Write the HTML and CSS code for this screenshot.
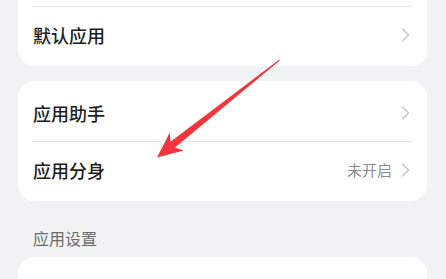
FILE: index.html
```html
<!DOCTYPE html>
<html lang="zh-CN">
<head>
<meta charset="utf-8">
<link rel="stylesheet" href="styles.css">
</head>
<body>
<div class="page">
  <div class="card card-cut">
    <div class="row">
      <span class="label">默认应用</span>
      <span class="right"><svg class="chev" viewBox="0 0 9 14" width="9" height="14"><polyline points="1.5,1 7.5,7 1.5,13"/></svg></span>
    </div>
  </div>
  <div class="card">
    <div class="row">
      <span class="label">应用助手</span>
      <span class="right"><svg class="chev" viewBox="0 0 9 14" width="9" height="14"><polyline points="1.5,1 7.5,7 1.5,13"/></svg></span>
    </div>
    <div class="row">
      <span class="label">应用分身</span>
      <span class="right"><span class="value">未开启</span><svg class="chev" viewBox="0 0 9 14" width="9" height="14"><polyline points="1.5,1 7.5,7 1.5,13"/></svg></span>
    </div>
  </div>
  <div class="section-title">应用设置</div>
  <div class="card card-last"></div>
  <svg class="arrow" viewBox="0 0 446 279" width="446" height="279">
    <polygon points="279.8,60.4 175,147.4 183.5,150.4 157,157.5 169.8,132.6 170.5,141.8 279,59.8"/>
  </svg>
</div>
</body>
</html>
```
FILE: styles.css
```css
html, body {
  margin: 0;
  padding: 0;
}
body {
  background: #f1f2f4;
  font-family: "Noto Sans CJK SC", "Noto Sans", sans-serif;
  width: 446px;
  height: 279px;
  overflow: hidden;
}
.page {
  position: relative;
  width: 446px;
  height: 279px;
  display: flex;
  flex-direction: column;
}
.card {
  background: #ffffff;
  border-radius: 16px;
  margin: 0 19px 0 18px;
  padding: 4px 15px 4px 14px;
}
.card-cut {
  border-top-left-radius: 0;
  border-top-right-radius: 0;
  padding-top: 6px;
}
.card + .card {
  margin-top: 15px;
}
.row {
  height: 56px;
  box-sizing: border-box;
  display: flex;
  align-items: center;
  justify-content: space-between;
}
.row + .row,
.card-cut .row {
  border-top: 1px solid #e6e7e9;
}
.label {
  font-size: 18px;
  line-height: 18px;
  font-weight: 500;
  color: #1d1d1d;
  padding-left: 1px;
}
.right {
  display: flex;
  align-items: center;
  gap: 9px;
  padding-right: 2px;
}
.value {
  font-size: 15px;
  line-height: 15px;
  color: #8a8a8a;
}
.chev {
  display: block;
  fill: none;
  stroke: #c6c6c8;
  stroke-width: 1.4;
  stroke-linecap: round;
  stroke-linejoin: round;
}
.section-title {
  font-size: 16px;
  line-height: 22px;
  color: #6b6b6b;
  padding: 26px 0 8px 33px;
}
.card-last {
  flex: 1;
  border-bottom-left-radius: 0;
  border-bottom-right-radius: 0;
}
.arrow {
  position: absolute;
  left: 0;
  top: 0;
  fill: #f2353b;
}
```
